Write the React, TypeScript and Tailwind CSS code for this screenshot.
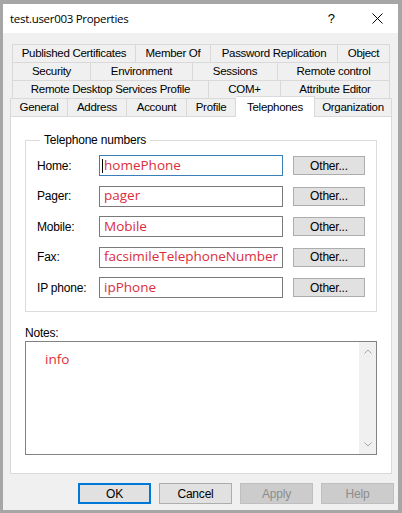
import React from "react";

const ui = { fontFamily: '"Liberation Sans", Arial, sans-serif' };
const red = { fontFamily: '"Open Sans", "Noto Sans", sans-serif' };

type Tab = { label: string; w: number; active?: boolean };

const rows: Tab[][] = [
  [
    { label: "Published Certificates", w: 124 },
    { label: "Member Of", w: 75 },
    { label: "Password Replication", w: 127 },
    { label: "Object", w: 52 },
  ],
  [
    { label: "Security", w: 79 },
    { label: "Environment", w: 102 },
    { label: "Sessions", w: 85 },
    { label: "Remote control", w: 112 },
  ],
  [
    { label: "Remote Desktop Services Profile", w: 197 },
    { label: "COM+", w: 72 },
    { label: "Attribute Editor", w: 109 },
  ],
];

const lastRow: Tab[] = [
  { label: "General", w: 58 },
  { label: "Address", w: 59 },
  { label: "Account", w: 60 },
  { label: "Profile", w: 49 },
  { label: "Telephones", w: 79, active: true },
  { label: "Organization", w: 77 },
];

const phones = [
  { label: "Home:", value: "homePhone", focused: true },
  { label: "Pager:", value: "pager" },
  { label: "Mobile:", value: "Mobile" },
  { label: "Fax:", value: "facsimileTelephoneNumber" },
  { label: "IP phone:", value: "ipPhone" },
];

function TabRow({ tabs, className }: { tabs: Tab[]; className: string }) {
  return (
    <div className={"flex h-[18px] " + className}>
      {tabs.map((t, i) => (
        <div
          key={t.label}
          style={{ width: t.w }}
          className={
            "flex items-center justify-center border-t border-r border-[#d9d9d9] bg-[#f0f0f0] text-[11.5px] tracking-[-0.3px] text-black " +
            (i === 0 ? "border-l" : "")
          }
        >
          {t.label}
        </div>
      ))}
    </div>
  );
}

function Btn({ label, kind }: { label: string; kind: "default" | "normal" | "disabled" }) {
  const cls =
    kind === "default"
      ? "border-2 border-[#0078d7] bg-[#e1e1e1] text-black"
      : kind === "normal"
        ? "border border-[#adadad] bg-[#e1e1e1] text-black"
        : "border border-[#bfbfbf] bg-[#cccccc] text-[#8d8d8d]";
  return (
    <div className={"flex h-[21px] w-[73px] items-center justify-center text-[12px] tracking-[-0.2px] " + cls}>
      {label}
    </div>
  );
}

export default function App() {
  return (
    <div
      style={ui}
      className="flex h-[513px] w-[402px] flex-col border-t-[4px] border-r-[4px] border-b-[3px] border-l-[3px] border-[#a6a6a6] bg-[#f0f0f0]"
    >
      {/* title bar */}
      <div className="flex h-[29px] items-center bg-white pl-[7px] pr-[14px]">
        <span style={red} className="text-[11.5px] tracking-[-0.3px] text-black">
          test.user003 Properties
        </span>
        <span className="ml-auto mr-[37px] text-[13px] text-black">?</span>
        <svg width="11" height="11" viewBox="0 0 11 11" className="mr-[1px]">
          <path d="M0.5 0.5 L10.5 10.5 M10.5 0.5 L0.5 10.5" stroke="#000" strokeWidth="1" />
        </svg>
      </div>

      <div className="flex flex-1 flex-col pt-[11px]">
        {/* tabs */}
        <TabRow tabs={rows[0]} className="ml-[9px]" />
        <TabRow tabs={rows[1]} className="ml-[9px]" />
        <TabRow tabs={rows[2]} className="ml-[9px]" />
        <div className="relative z-10 ml-[7px] flex h-[18px] items-end">
          {lastRow.map((t, i) =>
            t.active ? (
              <div
                key={t.label}
                style={{ width: t.w }}
                className="-mb-[1px] flex h-[21px] items-start justify-center border-t border-r border-[#d9d9d9] bg-white pt-[2px] text-[11.5px] tracking-[-0.3px]"
              >
                {t.label}
              </div>
            ) : (
              <div
                key={t.label}
                style={{ width: t.w }}
                className={
                  "flex h-[18px] items-center justify-center border-t border-r border-[#d9d9d9] bg-[#f0f0f0] text-[11.5px] tracking-[-0.3px] " +
                  (i === 0 ? "border-l" : "")
                }
              >
                {t.label}
              </div>
            )
          )}
        </div>

        {/* panel */}
        <div className="ml-[7px] h-[358px] w-[382px] border border-[#d9d9d9] bg-white px-[14px] pt-[15px]">
          <fieldset className="h-[180px] border border-[#dcdcdc] px-[11px] pt-[7px]">
            <legend className="ml-[3px] px-[4px] text-[12px] leading-[16px] tracking-[-0.2px]">Telephone numbers</legend>
            <div className="flex flex-col gap-[9.5px]">
              {phones.map((p) => (
                <div key={p.label} className="flex h-[21px] items-center">
                  <span className="w-[62px] text-[12px] tracking-[-0.2px]">{p.label}</span>
                  <div
                    className={
                      "relative flex h-[21px] w-[184px] items-center bg-white pl-[4px] " +
                      (p.focused ? "border border-[#3b7fb8]" : "border border-[#7a7a7a]")
                    }
                  >
                    {p.focused && <span className="absolute left-[2px] top-[3px] h-[14px] w-px bg-black" />}
                    <span style={red} className="text-[13.5px] leading-none text-[#dc2d3c]">
                      {p.value}
                    </span>
                  </div>
                  <div className="ml-[10px] flex h-[19px] w-[72px] items-center justify-center border border-[#adadad] bg-[#e1e1e1] text-[12px] tracking-[-0.2px]">
                    Other...
                  </div>
                </div>
              ))}
            </div>
          </fieldset>

          <div className="mt-[13px] text-[12px] leading-[16px] tracking-[-0.2px]">Notes:</div>
          <div className="flex h-[114px] border border-[#828282] bg-white">
            <div className="flex-1 pl-[19px] pt-[5px]">
              <span style={red} className="text-[13.5px] text-[#dc2d3c]">
                info
              </span>
            </div>
            <div className="flex w-[17px] flex-col items-center justify-between bg-[#f0f0f0] py-[7px]">
              <svg width="8" height="5" viewBox="0 0 8 5">
                <path d="M0.5 4.5 L4 1 L7.5 4.5" stroke="#a8a8a8" fill="none" />
              </svg>
              <svg width="8" height="5" viewBox="0 0 8 5">
                <path d="M0.5 0.5 L4 4 L7.5 0.5" stroke="#a8a8a8" fill="none" />
              </svg>
            </div>
          </div>
        </div>

        {/* buttons */}
        <div className="ml-[75px] mt-[9px] flex gap-[8px]">
          <Btn label="OK" kind="default" />
          <Btn label="Cancel" kind="normal" />
          <Btn label="Apply" kind="disabled" />
          <Btn label="Help" kind="disabled" />
        </div>
      </div>
    </div>
  );
}
